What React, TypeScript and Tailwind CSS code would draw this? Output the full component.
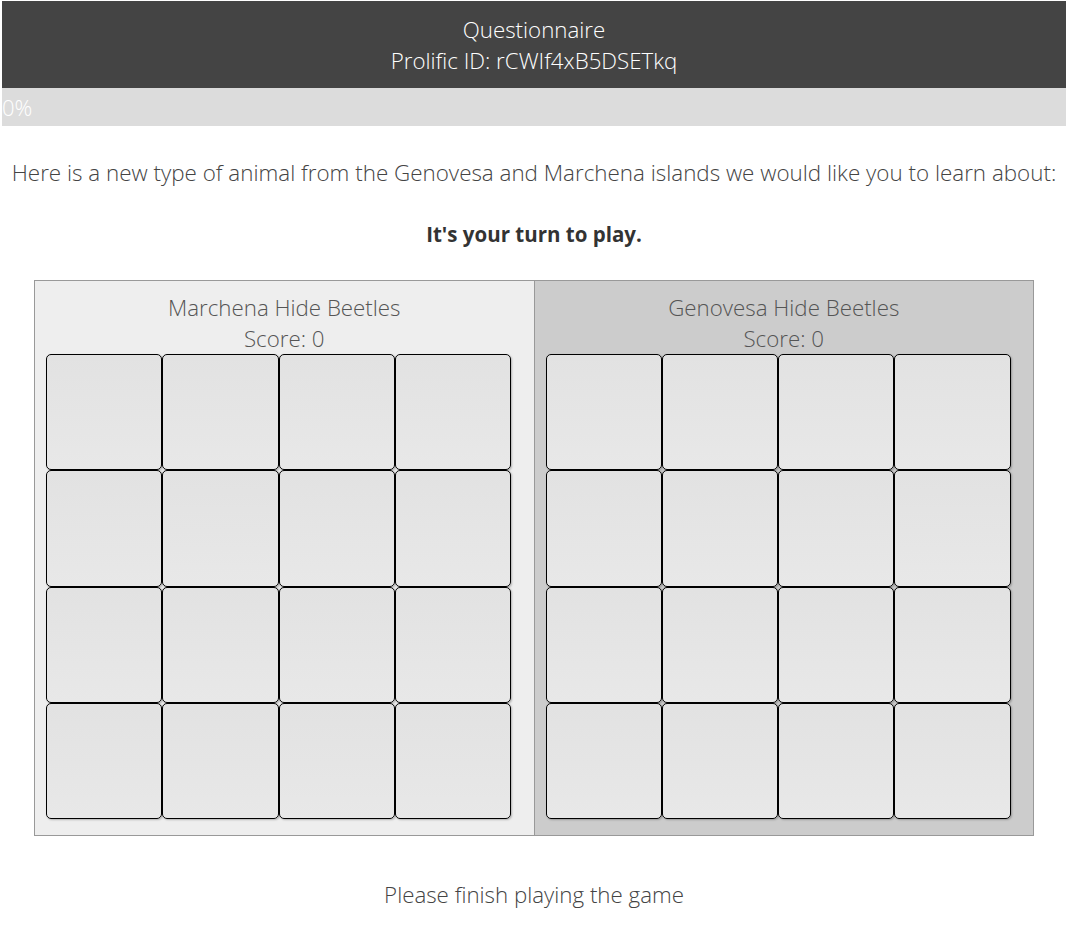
import React from "react";

function Grid() {
  return (
    <div className="grid grid-cols-4 w-[465px] ml-[11px]">
      {Array.from({ length: 16 }).map((_, i) => (
        <div
          key={i}
          className="h-[116.25px] rounded-[5px] border-[1.5px] border-black bg-gradient-to-b from-[#e2e2e2] to-[#e8e8e8] shadow-[1px_1px_2px_rgba(0,0,0,0.25)]"
        />
      ))}
    </div>
  );
}

function Side({ name, bg }: { name: string; bg: string }) {
  return (
    <div className={`flex-1 ${bg} pt-[11px] pb-[16px]`}>
      <div className="text-center text-[22.3px] leading-[31px] text-[#555] font-light">
        <div>{name}</div>
        <div>Score: 0</div>
      </div>
      <div className="mt-0">
        <Grid />
      </div>
    </div>
  );
}

export default function App() {
  return (
    <div className="bg-white min-h-[926px] px-[2px] pt-[1px] text-[#444]" style={{ fontFamily: '"Open Sans", "Noto Sans", sans-serif' }}>
      <div className="bg-[#444444] h-[87px] flex flex-col items-center justify-center text-white text-[22.3px] leading-[31px] font-light">
        <div>Questionnaire</div>
        <div>Prolific ID: rCWIf4xB5DSETkq</div>
      </div>
      <div className="bg-[#dcdcdc] h-[38px] text-white text-[22px] leading-[38px] font-light">0%</div>
      <p className="text-center text-[22.4px] font-light mt-[32px] leading-[30px] whitespace-nowrap">
        Here is a new type of animal from the Genovesa and Marchena islands we would like you to learn about:
      </p>
      <p className="text-center text-[20.5px] font-bold text-[#333] mt-[31px] leading-[30px]">It's your turn to play.</p>
      <div className="mt-[31px] mx-auto w-[1000px] border border-[#999] flex">
        <Side name="Marchena Hide Beetles" bg="bg-[#eeeeee] border-r border-[#999]" />
        <Side name="Genovesa Hide Beetles" bg="bg-[#cccccc]" />
      </div>
      <p className="text-center text-[22.3px] font-light mt-[44px] leading-[30px]">Please finish playing the game</p>
    </div>
  );
}
